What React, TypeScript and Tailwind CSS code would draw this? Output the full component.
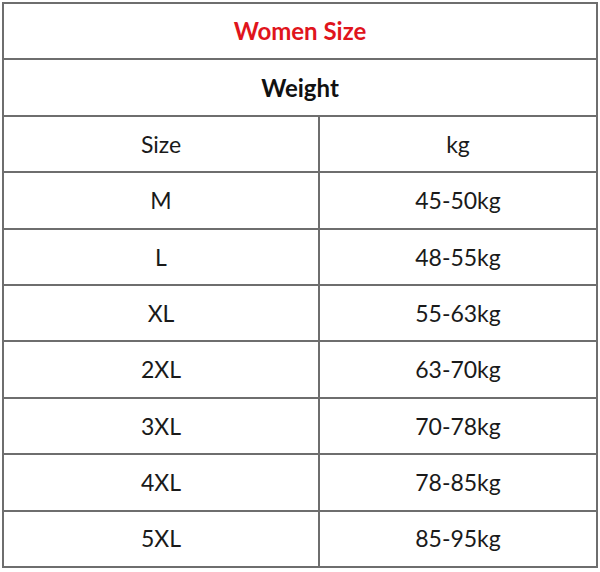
const rows = [
  { size: "M", kg: "45-50kg" },
  { size: "L", kg: "48-55kg" },
  { size: "XL", kg: "55-63kg" },
  { size: "2XL", kg: "63-70kg" },
  { size: "3XL", kg: "70-78kg" },
  { size: "4XL", kg: "78-85kg" },
  { size: "5XL", kg: "85-95kg" },
];

const App = () => {
  return (
    <div className="w-[600px] h-[572px] bg-white pt-[2px] pl-[2px]" style={{ fontFamily: "Lato, 'Open Sans', sans-serif" }}>
      <div className="w-[596px] border-t-2 border-x-2 border-[#6e6e6e] text-[23px] text-[#1a1a1a]">
        {/* Title rows */}
        <div className="h-[56.4px] border-b-2 border-[#6e6e6e] flex items-center justify-center">
          <span className="font-bold text-[24px] text-[#e0141c]">Women Size</span>
        </div>
        <div className="h-[56.4px] border-b-2 border-[#6e6e6e] flex items-center justify-center">
          <span className="font-bold text-[24px] text-[#111]">Weight</span>
        </div>

        {/* Header */}
        <div className="h-[56.4px] border-b-2 border-[#6e6e6e] flex">
          <div className="w-[316px] border-r-2 border-[#6e6e6e] flex items-center justify-center">Size</div>
          <div className="flex-1 flex items-center justify-center">kg</div>
        </div>

        {rows.map((row) => (
          <div key={row.size} className="h-[56.4px] border-b-2 border-[#6e6e6e] flex">
            <div className="w-[316px] border-r-2 border-[#6e6e6e] flex items-center justify-center">{row.size}</div>
            <div className="flex-1 flex items-center justify-center">{row.kg}</div>
          </div>
        ))}
      </div>
    </div>
  );
};

export default App;
